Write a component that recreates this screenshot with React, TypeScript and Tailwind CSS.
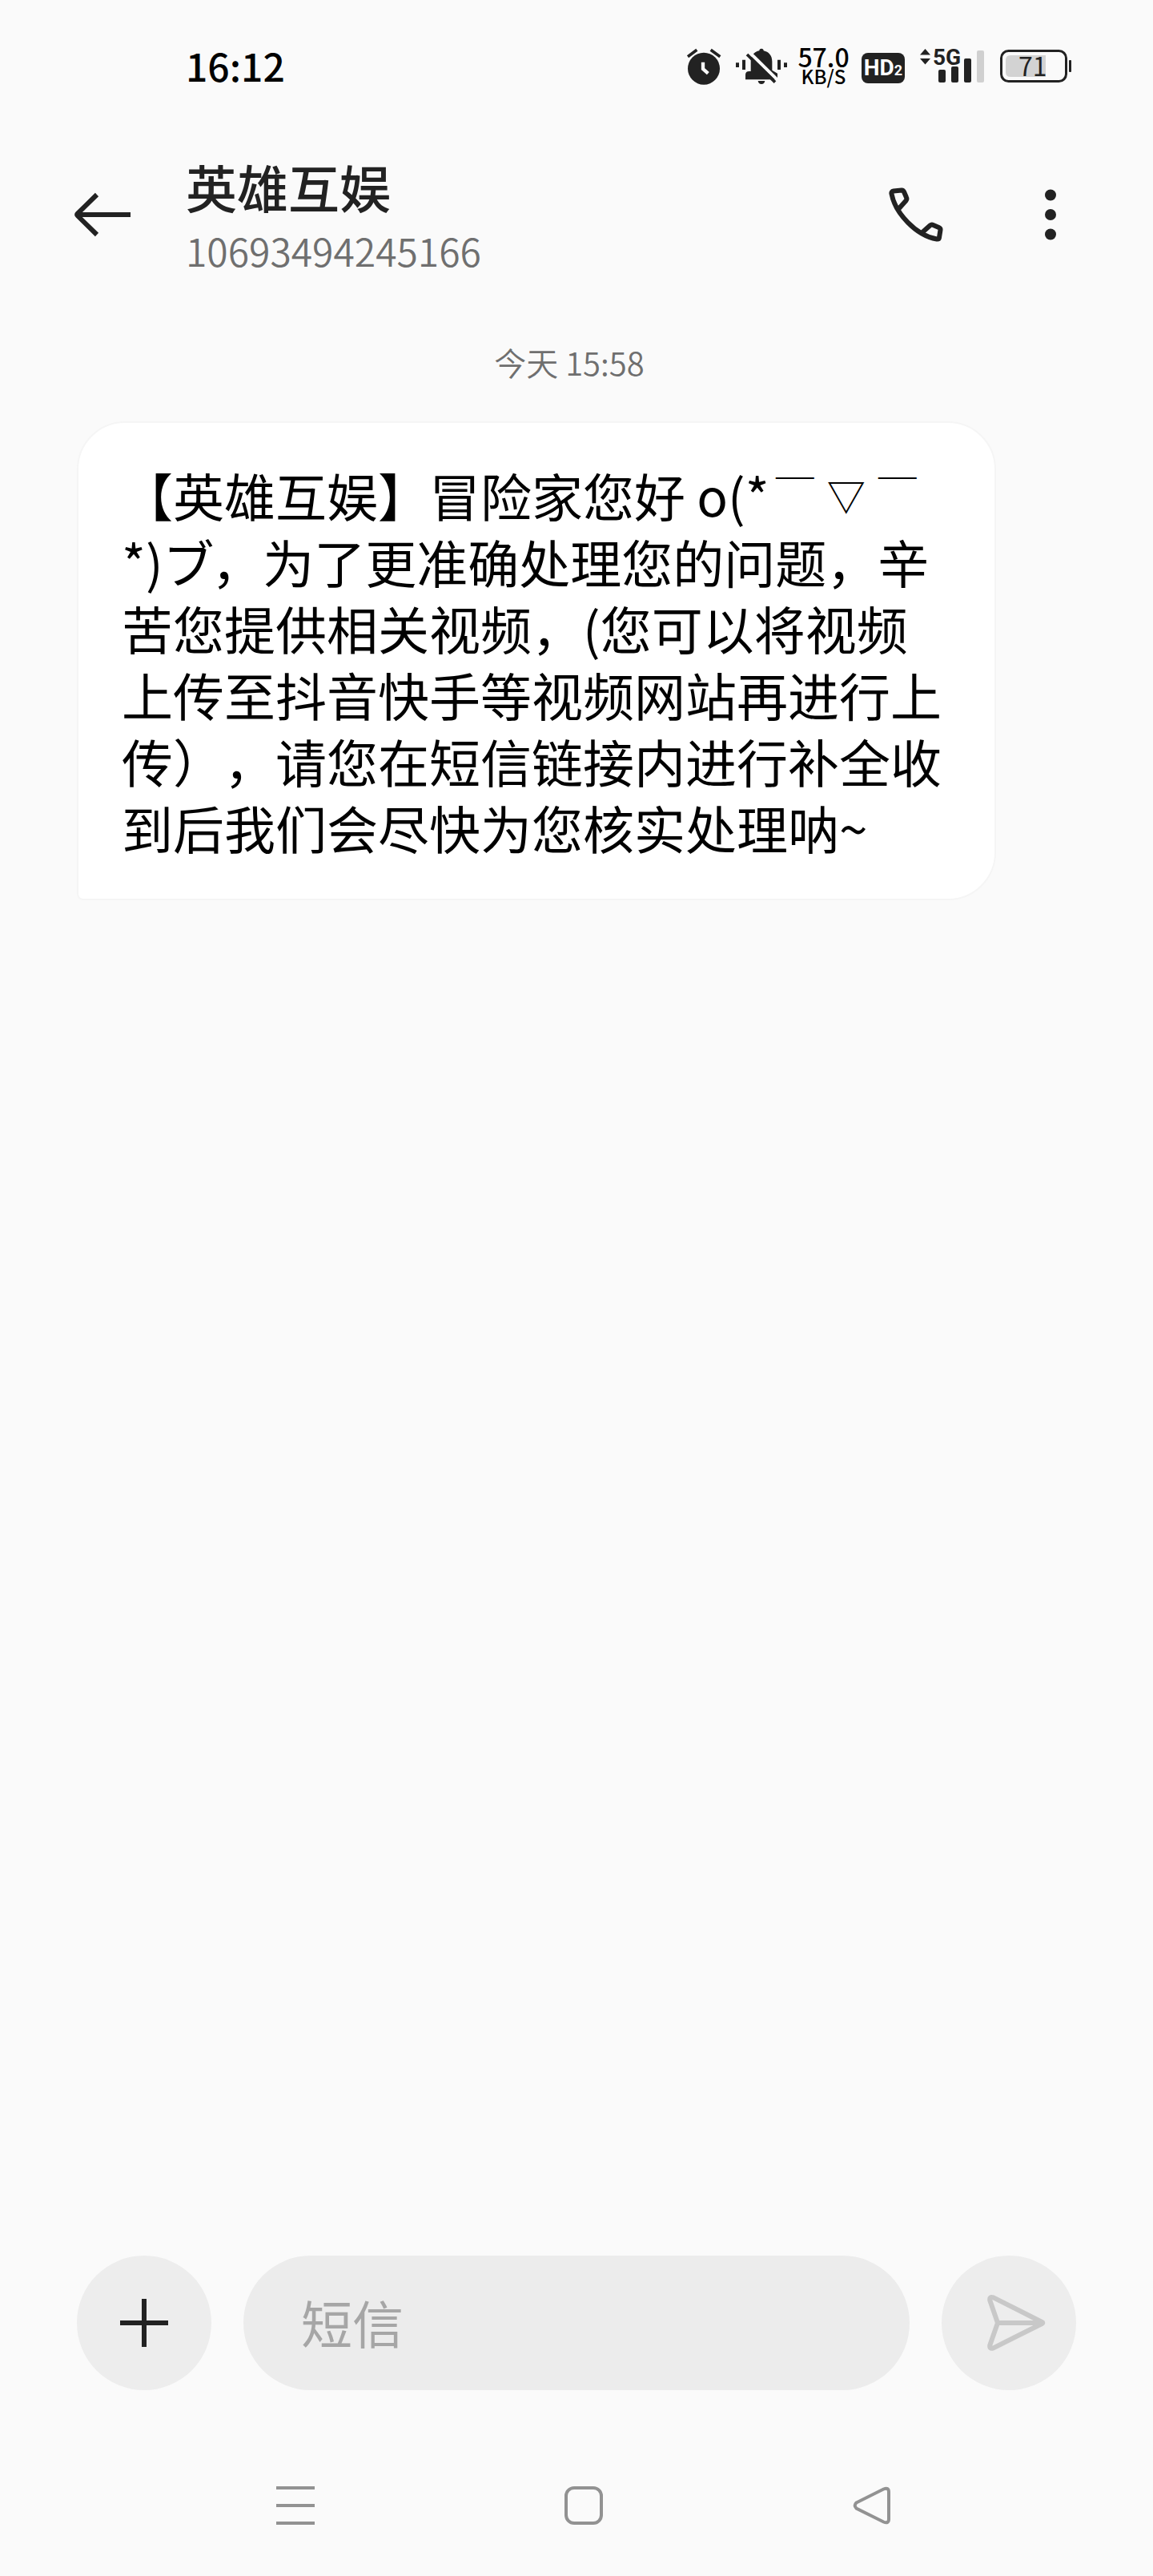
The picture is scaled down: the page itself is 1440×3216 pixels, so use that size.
import type { ReactNode } from "react";

type NavItem = { label: string; icon: ReactNode };

const navItems: NavItem[] = [
  {
    label: "最近任务",
    icon: <path d="M0 2h48M0 24h48M0 46h48" />,
  },
  {
    label: "主屏幕",
    icon: <rect x="2" y="2" width="44" height="44" rx="10" />,
  },
  {
    label: "返回",
    icon: <path d="M4.5 20.5 38.500 3.500Q45 1 45 7V41Q45 47 38.500 44.500L4.500 27.500Q1 24 4.500 20.500Z" />,
  },
];

export default function App() {
  return (
    <div
      lang="zh-CN"
      className="flex min-h-screen flex-col bg-[#fafafa] font-['Noto_Sans_CJK_SC',sans-serif] text-[#222222]"
    >
      <StatusBar />
      <ChatHeader />
      <main className="flex-1">
        <p className="mr-[18px] mt-14 text-center text-[40px] font-[350] leading-[60px] text-[#6f6f6f]">
          今天 15:58
        </p>
        <MessageBubble />
      </main>
      <Composer />
      <nav className="mb-16 grid grid-cols-3 justify-items-center pl-[189px] pr-[171px]" aria-label="系统导航">
        {navItems.map((item) => (
          <button key={item.label} type="button" aria-label={item.label}>
            <svg className="size-12" viewBox="0 0 48 48" fill="none" stroke="#929292" strokeWidth="4">
              {item.icon}
            </svg>
          </button>
        ))}
      </nav>
    </div>
  );
}

function StatusBar() {
  return (
    <div className="flex h-[170px] items-center justify-between pl-[232px] pr-[101px]">
      <span className="pb-2 text-5xl font-medium text-black">16:12</span>
      <div className="flex items-center gap-[17px]">
        <AlarmIcon />
        <MutedBellIcon />
        <div className="flex w-[61px] flex-col items-center whitespace-nowrap pb-2 font-medium text-black">
          <span className="text-[32px] leading-7">57.0</span>
          <span className="text-2xl leading-[22px]">KB/S</span>
        </div>
        <div className="flex h-[38px] w-[54px] items-baseline justify-center rounded-lg bg-[#222222] font-['Roboto',sans-serif] font-bold text-white">
          <span className="text-[28px] leading-[38px]">HD</span>
          <span className="text-lg leading-none">2</span>
        </div>
        <SignalIcon />
        <BatteryIcon />
      </div>
    </div>
  );
}

function ChatHeader() {
  return (
    <header className="flex h-[196px] items-center pl-[92px] pr-[116px]">
      <button type="button" aria-label="返回">
        <svg className="size-[72px]" viewBox="0 0 72 72" fill="none" stroke="#222222" strokeWidth="6">
          <path d="M71 36H4M29 11 5 34.500Q3.500 36 5 37.500L29 61" />
        </svg>
      </button>
      <div className="ml-[68px] flex-1 pt-1">
        <h1 className="text-[64px] font-medium leading-[80px]">英雄互娱</h1>
        <p className="mt-1 text-5xl font-[350] leading-[72px] text-[#6f6f6f]">10693494245166</p>
      </div>
      <button type="button" aria-label="拨打电话">
        <svg
          className="size-[72px]"
          viewBox="48 32 72 72"
          fill="none"
          stroke="#222222"
          strokeWidth="6"
          strokeLinejoin="round"
        >
          <path d="M63 60 71.500 50.500Q73 48.500 72 46.500L69 39.500Q68 37.300 66 37.500L56 38.500Q52.800 39 53.500 42C58 66 84 94 110 98.500Q112.700 98.800 113 96.500L114.500 87Q114.800 85 112.500 84L105.500 81Q103.500 79.800 101.500 81.500L92 90" />
        </svg>
      </button>
      <button type="button" aria-label="更多" className="ml-[120px]">
        <svg className="h-16 w-6" viewBox="0 0 24 64" fill="#222222">
          <circle cx="12" cy="7.500" r="7" />
          <circle cx="12" cy="32" r="7" />
          <circle cx="12" cy="56.500" r="7" />
        </svg>
      </button>
    </header>
  );
}

function MessageBubble() {
  return (
    <article className="ml-24 mr-[196px] mt-[44px] rounded-[60px] rounded-bl-lg border-2 border-[#f5f5f5] bg-white pb-12 pl-[54px] pt-12">
      <p className="whitespace-nowrap text-[64px] leading-[83px] text-black [text-spacing-trim:space-all]">
        【英雄互娱】冒险家您好 o(*
        <span className="inline-grid w-48 grid-cols-3 text-center align-top text-5xl font-medium leading-[83px]">
          <span>￣</span>
          <span>▽</span>
          <span>￣</span>
        </span>
        <br />
        *)ブ，为了更准确处理您的问题，辛
        <br />
        苦您提供相关视频，(您可以将视频
        <br />
        上传至抖音快手等视频网站再进行上
        <br />
        传），请您在短信链接内进行补全收
        <br />
        到后我们会尽快为您核实处理呐~
      </p>
    </article>
  );
}

function Composer() {
  return (
    <form className="mb-[120px] flex items-center gap-10 px-24" onSubmit={(e) => e.preventDefault()}>
      <button
        type="button"
        aria-label="添加"
        className="flex size-[168px] shrink-0 items-center justify-center rounded-full bg-[#ededed]"
      >
        <svg className="size-[60px]" viewBox="0 0 60 60" stroke="#222222" strokeWidth="6">
          <path d="M30 0v60M0 30h60" />
        </svg>
      </button>
      <input
        type="text"
        aria-label="短信"
        placeholder="短信"
        className="h-[168px] min-w-0 flex-1 rounded-full bg-[#ececec] px-[72px] pb-1 text-[64px] outline-none placeholder:text-[#a6a6a6]"
      />
      <button
        type="submit"
        aria-label="发送"
        className="flex size-[168px] shrink-0 items-center justify-center rounded-full bg-[#ededed]"
      >
        <svg
          className="size-24"
          viewBox="516 186 288 288"
          fill="none"
          stroke="#c8c8c8"
          strokeWidth="18"
          strokeLinejoin="round"
        >
          <path d="M618 330 589 246Q586 230 602 235L784 327Q790 330 784 333L602 424Q586 429 589 413ZM618 330H784" />
        </svg>
      </button>
    </form>
  );
}

function AlarmIcon() {
  return (
    <svg className="h-[50px] w-[42px] overflow-visible" viewBox="54 60 126 150" fill="none">
      <circle cx="117" cy="137" r="60" fill="#222222" />
      <path d="M57 92 91 67M143 67 178 92" stroke="#222222" strokeWidth="11" />
      <path d="M114 113V138L133 155" stroke="#fafafa" strokeWidth="13" />
    </svg>
  );
}

function MutedBellIcon() {
  return (
    <svg className="h-[50px] w-16 overflow-visible" viewBox="231 60 192 150" fill="#222222">
      <path d="M293 147V110C293 87 307 73 325 70A8 8 0 0 1 341 70C360 74 373 88 373 110V143L393 155V178H273V160Q273 147 287 147Z" />
      <path d="M320 183H346Q344 195 333 195T320 183Z" />
      <path d="M237 115h12v17h-12zM261 104h12v37h-12zM393 104h12v37h-12zM417 115h12v17h-12z" />
      <path d="M284 72 398 184" stroke="#fafafa" strokeWidth="12" />
      <path d="M279 84 384 188" stroke="#222222" strokeWidth="11" />
    </svg>
  );
}

function SignalIcon() {
  return (
    <div className="relative h-[50px] w-[82px]">
      <svg className="size-full" viewBox="0 0 82 50" fill="#222222">
        <path d="M2 8.500 8.500 1 15 8.500ZM2 13 8.500 20.500 15 13Z" />
        <rect x="25" y="27" width="9" height="16" rx="2" />
        <rect x="41" y="23" width="9" height="20" rx="2" />
        <rect x="57" y="13" width="9" height="30" rx="2" />
        <rect x="73" y="3" width="9" height="40" rx="2" fill="#d0d0d0" />
      </svg>
      <span className="absolute left-[18px] top-0 font-['Roboto',sans-serif] text-[28px] font-bold leading-6">5G</span>
    </div>
  );
}

function BatteryIcon() {
  return (
    <div className="relative h-[50px] w-[93px]">
      <svg className="size-full" viewBox="0 0 93 50" fill="none">
        <path d="M16 9H60V36H16Q10 36 10 30V15Q10 9 16 9Z" fill="#d3d3d3" />
        <rect x="4.500" y="3.500" width="81" height="38" rx="9" stroke="#222222" strokeWidth="3" />
        <rect x="89" y="15" width="3" height="15" rx="1" fill="#222222" />
      </svg>
      <span className="absolute left-[26px] top-0 text-[32px] leading-[42px]">71</span>
    </div>
  );
}
